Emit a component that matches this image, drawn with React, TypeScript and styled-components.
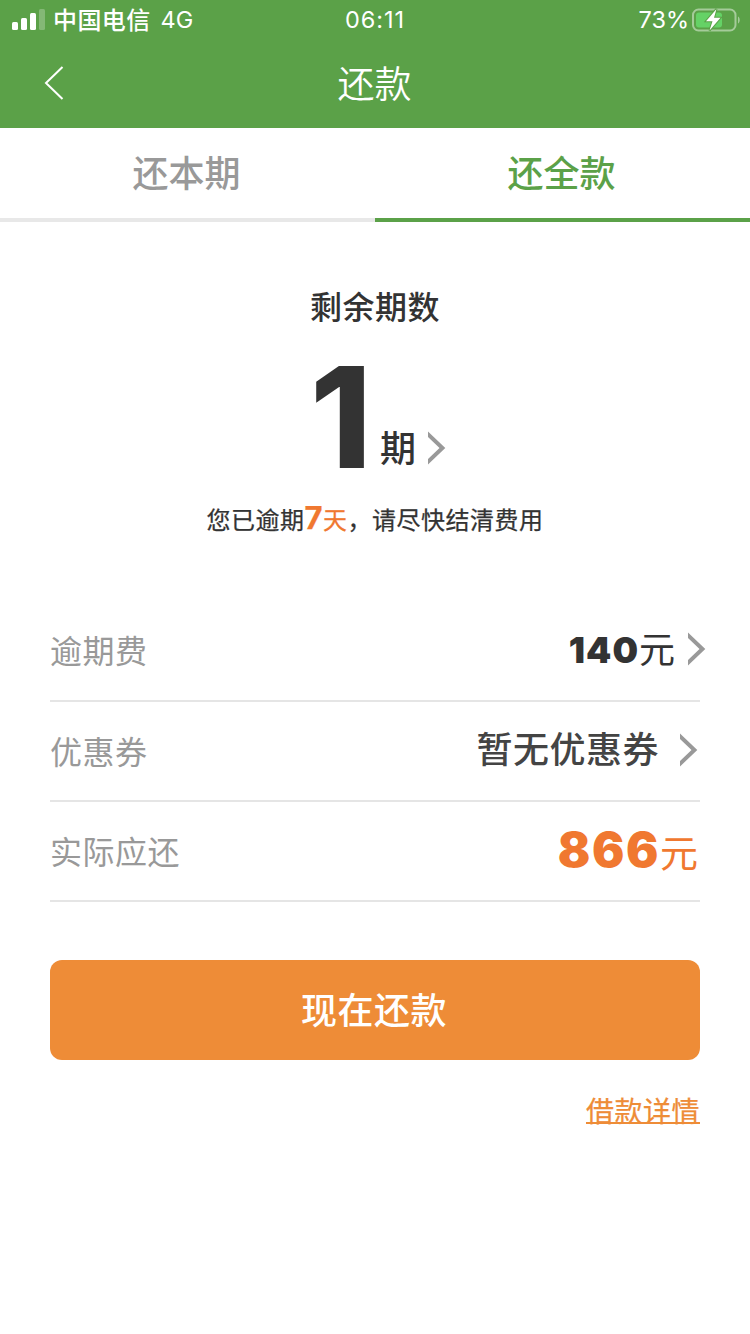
import React from "react";
import styled, { createGlobalStyle } from "styled-components";

const GlobalStyle = createGlobalStyle`
  * { box-sizing: border-box; }
  body {
    margin: 0;
    background: #fff;
    color: #333;
    font-family: Inter, "Noto Sans CJK SC", sans-serif;
  }
  button { font: inherit; border: 0; padding: 0; background: none; cursor: pointer; }
`;

const Page = styled.div`
  display: flex;
  flex-direction: column;
  width: 750px;
  height: 1334px;
  overflow: hidden;
`;

const Header = styled.header`
  height: 128px;
  background: #5ba148;
  color: #fff;
`;

const StatusBar = styled.div`
  display: grid;
  grid-template-columns: 1fr auto 1fr;
  align-items: center;
  height: 40px;
  padding: 0 10px 0 12px;
  font-size: 24px;
  line-height: 40px;
`;

const StatusGroup = styled.div<{ $end?: boolean }>`
  display: flex;
  align-items: center;
  justify-content: ${(p) => (p.$end ? "flex-end" : "flex-start")};
`;

const Carrier = styled.span`
  margin-left: 7px;
  padding-top: 2px;
  font-weight: 500;
  line-height: 38px;
  letter-spacing: 0.4px;
`;

const Network = styled.span`
  margin-left: 10px;
  font-size: 23.5px;
`;

const Clock = styled.span`
  margin-right: 2px;
  font-size: 23.5px;
  letter-spacing: 0.9px;
`;

const Percent = styled.span`
  margin-right: 3px;
  font-size: 23.5px;
`;

const NavBar = styled.nav`
  display: grid;
  grid-template-columns: 108px 1fr 108px;
  align-items: center;
  height: 88px;
`;

const BackButton = styled.button`
  display: flex;
  justify-content: center;
  padding-bottom: 3px;
`;

const Title = styled.h1`
  margin: 0;
  padding: 2px 1px 0 0;
  text-align: center;
  font-size: 37px;
  font-weight: 350;
  line-height: 86px;
`;

const Tabs = styled.div`
  display: flex;
`;

const Tab = styled.button<{ $active?: boolean }>`
  flex: 1;
  height: 94px;
  padding: 3px 2px 0 0;
  border-bottom: 4px solid ${(p) => (p.$active ? "#5ba148" : "#e8e8e8")};
  color: ${(p) => (p.$active ? "#5ba148" : "#999")};
  font-size: 36px;
  font-weight: 500;
  line-height: 87px;
`;

const Summary = styled.section`
  display: flex;
  flex-direction: column;
  align-items: center;
  height: 379px;
  padding-top: 62px;
`;

const SummaryLabel = styled.div`
  font-size: 32px;
  font-weight: 500;
  line-height: 48px;
  letter-spacing: 0.5px;
`;

const Periods = styled.div`
  display: flex;
  align-items: flex-end;
  height: 137px;
  padding-left: 6px;
`;

const PeriodCount = styled.span`
  font-size: 140px;
  font-weight: 760;
  line-height: 102px;
  padding-bottom: 1px;
`;

const PeriodUnit = styled.span`
  margin: 0 12px 0 8px;
  font-size: 36px;
  font-weight: 500;
  line-height: 40px;
`;

const Notice = styled.p`
  margin: 32px 0 0;
  font-size: 24px;
  font-weight: 400;
  line-height: 40px;
  letter-spacing: 0.5px;
  -webkit-text-stroke: 0.25px currentColor;
`;

const Overdue = styled.span`
  color: #f07830;
`;

const OverdueDays = styled.b`
  font-size: 31px;
  font-weight: 700;
  line-height: 30px;
`;

const Details = styled.section`
  margin: 0 50px;
`;

const Row = styled.div<{ $first?: boolean; $shift?: number }>`
  display: flex;
  align-items: center;
  justify-content: space-between;
  height: ${(p) => (p.$first ? 101 : 100)}px;
  border-bottom: 2px solid #e5e5e5;

  > :last-child {
    margin-right: ${(p) => p.$shift ?? 0}px;
  }
`;

const RowLabel = styled.span`
  padding-bottom: 3px;
  color: #999;
  font-size: 32px;
  letter-spacing: 0.5px;
`;

const RowValue = styled.span<{ $gap?: number }>`
  display: flex;
  align-items: center;
  gap: ${(p) => p.$gap ?? 0}px;
  padding-bottom: ${(p) => (p.$gap ? 2 : 0)}px;
  font-size: 36px;
  line-height: 96px;
`;

const Amount = styled.span<{ $due?: boolean }>`
  color: ${(p) => (p.$due ? "#f07830" : "#333")};
  font-size: ${(p) => (p.$due ? 38 : 36)}px;
  font-weight: 400;

  b {
    font-size: ${(p) => (p.$due ? 48 : 36)}px;
    font-weight: 900;
    letter-spacing: ${(p) => (p.$due ? 1.6 : 1)}px;
  }
`;

const Coupon = styled.span`
  padding-top: 1px;
  line-height: 95px;
  color: #444;
  font-weight: 500;
  letter-spacing: 0.5px;
`;

const PayButton = styled.button`
  height: 100px;
  margin: 58px 50px 0;
  padding: 2px 2px 0 0;
  border-radius: 12px;
  background: #ee8c37;
  color: #fff;
  font-size: 36px;
  font-weight: 500;
  line-height: 98px;
  letter-spacing: 0.5px;
`;

const LoanLink = styled.a`
  align-self: flex-end;
  margin: 32px 50px 0 0;
  color: #ee8c37;
  font-size: 28px;
  line-height: 40px;
  letter-spacing: 0.5px;
  text-decoration: underline;
  text-decoration-thickness: 2px;
  text-decoration-skip-ink: none;
  text-underline-offset: 0;
  -webkit-text-stroke: 0.25px currentColor;
`;

const ChevronSvg = styled.svg<{ $lift?: number }>`
  display: block;
  flex: none;
  margin-bottom: ${(p) => p.$lift ?? 0}px;
`;

const Chevron = ({ lift }: { lift?: number }) => (
  <ChevronSvg $lift={lift} width="18" height="34" viewBox="0 0 18 34">
    <path d="M0 0.5L17.3 17L0 33.5V28L11.5 17L0 6Z" fill="#999" />
  </ChevronSvg>
);

const Signal = () => (
  <svg width="34" height="22" viewBox="0 0 34 22" fill="#fff">
    <rect x="0" y="13" width="6" height="8" rx="1.5" />
    <rect x="9" y="9" width="6" height="12" rx="1.5" />
    <rect x="18" y="4" width="6" height="17" rx="1.5" />
    <rect x="27" y="0" width="6" height="21" rx="1.5" opacity="0.25" />
  </svg>
);

const Battery = () => (
  <svg width="48" height="24" viewBox="0 0 48 24">
    <rect x="1" y="1.5" width="42.5" height="21" rx="5.5" fill="none" stroke="#fff" strokeOpacity="0.45" strokeWidth="2" />
    <path d="M46 8.5C48.3 9.8 48.3 14.2 46 15.5Z" fill="#fff" fillOpacity="0.45" />
    <rect x="4" y="4.5" width="26" height="15" rx="3" fill="#65d266" />
    <path
      d="M24.5 1L14 13.2H20.5L17.5 22.5L28.5 9.8H22Z"
      fill="#fff"
      stroke="#5ba148"
      strokeWidth="2"
      paintOrder="stroke"
    />
  </svg>
);

export default function App() {
  return (
    <Page>
      <GlobalStyle />
      <Header>
        <StatusBar>
          <StatusGroup>
            <Signal />
            <Carrier>中国电信</Carrier>
            <Network>4G</Network>
          </StatusGroup>
          <Clock>06:11</Clock>
          <StatusGroup $end>
            <Percent>73%</Percent>
            <Battery />
          </StatusGroup>
        </StatusBar>
        <NavBar>
          <BackButton aria-label="返回">
            <svg width="20" height="34" viewBox="0 0 20 34" fill="none" stroke="#fff" strokeWidth="2">
              <path d="M18.5 1L2 17L18.5 33" />
            </svg>
          </BackButton>
          <Title>还款</Title>
        </NavBar>
      </Header>
      <Tabs>
        <Tab>还本期</Tab>
        <Tab $active>还全款</Tab>
      </Tabs>
      <Summary>
        <SummaryLabel>剩余期数</SummaryLabel>
        <Periods>
          <PeriodCount>1</PeriodCount>
          <PeriodUnit>期</PeriodUnit>
          <Chevron lift={4} />
        </Periods>
        <Notice>
          您已逾期
          <Overdue>
            <OverdueDays>7</OverdueDays>天
          </Overdue>
          ，请尽快结清费用
        </Notice>
      </Summary>
      <Details>
        <Row $first $shift={-6}>
          <RowLabel>逾期费</RowLabel>
          <RowValue $gap={13}>
            <Amount>
              <b>140</b>元
            </Amount>
            <Chevron lift={1} />
          </RowValue>
        </Row>
        <Row $shift={2}>
          <RowLabel>优惠券</RowLabel>
          <RowValue $gap={21}>
            <Coupon>暂无优惠券</Coupon>
            <Chevron />
          </RowValue>
        </Row>
        <Row $shift={2}>
          <RowLabel>实际应还</RowLabel>
          <RowValue>
            <Amount $due>
              <b>866</b>元
            </Amount>
          </RowValue>
        </Row>
      </Details>
      <PayButton>现在还款</PayButton>
      <LoanLink>借款详情</LoanLink>
    </Page>
  );
}
